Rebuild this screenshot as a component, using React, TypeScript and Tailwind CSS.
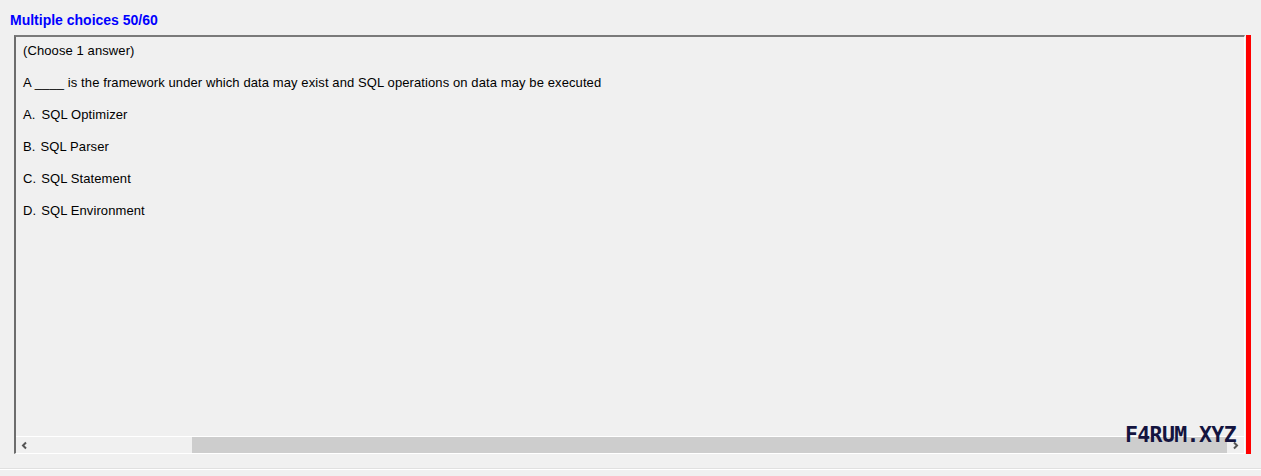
import React from "react";

export default function App() {
  const options = [
    ["A.", "SQL Optimizer", "ml-[6px]"],
    ["B.", "SQL Parser", "ml-[5px]"],
    ["C.", "SQL Statement", "ml-[5px]"],
    ["D.", "SQL Environment", "ml-[5px]"],
  ];
  return (
    <div
      className="relative w-[1261px] h-[476px] bg-[#f0f0f0] overflow-hidden"
      style={{ fontFamily: '"Liberation Sans", Arial, sans-serif' }}
    >
      <div className="pl-[10px] pt-[12px] h-[35px] text-[14px] leading-[16px] font-bold text-[#0000ff]">
        Multiple choices 50/60
      </div>
      <div className="flex pl-[14px] h-[419px]">
        <div className="relative flex flex-col w-[1231px] h-full border-l-2 border-t-2 border-l-[#6d6d6d] border-t-[#7a7a7a] border-r border-b border-r-white border-b-white">
          <div className="flex-1 flex flex-col gap-[17px] pl-[7px] pt-[6px] text-[13px] leading-[15px] text-[#000] tracking-[0.1px]">
            <div>(Choose 1 answer)</div>
            <div>A ____ is the framework under which data may exist and SQL operations on data may be executed</div>
            {options.map(([l, t, m], i) => (
              <div key={i} className="flex">
                <span>{l}</span>
                <span className={m}>{t}</span>
              </div>
            ))}
          </div>
          <div className="flex h-[17px] border-t border-t-white bg-[#f0f0f0]">
            <div className="w-[17px] flex items-center justify-center">
              <svg width="9" height="9" viewBox="0 0 9 9">
                <path d="M6 1.5 L3 4.5 L6 7.5" stroke="#555" strokeWidth="2" fill="none" />
              </svg>
            </div>
            <div className="flex-1 flex">
              <div className="w-[159px]" />
              <div className="w-[1035px] bg-[#cdcdcd]" />
              <div className="flex-1" />
            </div>
            <div className="w-[17px] flex items-center justify-center">
              <svg width="9" height="9" viewBox="0 0 9 9">
                <path d="M3 1.5 L6 4.5 L3 7.5" stroke="#555" strokeWidth="2" fill="none" />
              </svg>
            </div>
          </div>
          <div
            className="absolute right-[8px] bottom-[7px] text-[21.5px] leading-[22px] font-bold text-[#14143f] tracking-[-0.6px]"
            style={{ fontFamily: '"DejaVu Sans Mono", "Liberation Mono", monospace' }}
          >
            F4RUM.XYZ
          </div>
        </div>
        <div className="w-[5px] h-full ml-[1px] bg-[#ff0000]" />
      </div>
      <div className="mt-[14px] h-[2px] border-t border-t-[#e0e0e0] bg-white" />
    </div>
  );
}
